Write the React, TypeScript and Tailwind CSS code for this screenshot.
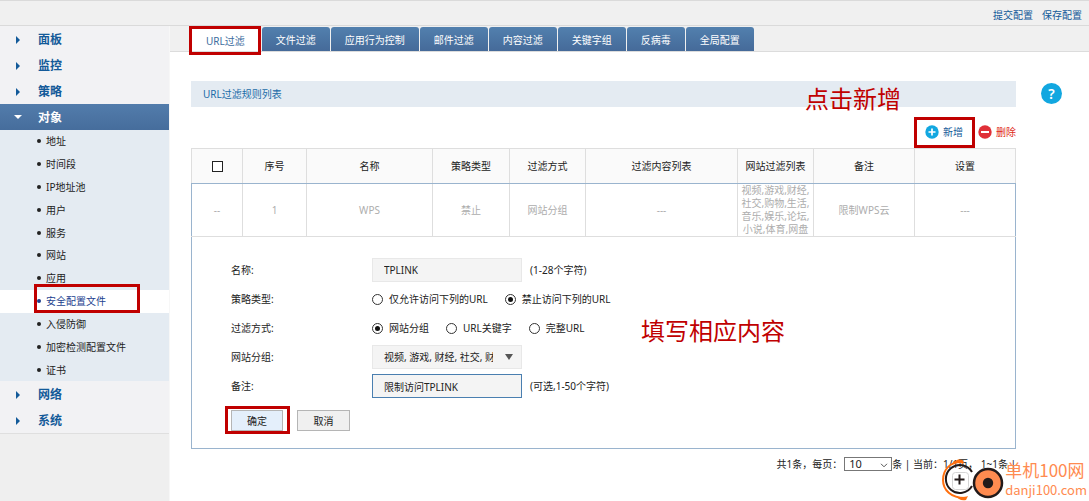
import { useState } from 'react'
import type { ReactNode } from 'react'

const TABS = ['URL过滤', '文件过滤', '应用行为控制', '邮件过滤', '内容过滤', '关键字组', '反病毒', '全局配置']

const OBJECT_ITEMS = [
  '地址',
  '时间段',
  'IP地址池',
  '用户',
  '服务',
  '网站',
  '应用',
  '安全配置文件',
  '入侵防御',
  '加密检测配置文件',
  '证书',
]

const COLUMNS = [
  { title: '序号', width: 'w-[64px]' },
  { title: '名称', width: 'w-[126px]' },
  { title: '策略类型', width: 'w-[77px]' },
  { title: '过滤方式', width: 'w-[76px]' },
  { title: '过滤内容列表', width: 'w-[152px]' },
  { title: '网站过滤列表', width: 'w-[76px]' },
  { title: '备注', width: 'w-[101px]' },
  { title: '设置', width: '' },
]

// red outline used to point at a step
const Mark = ({ className }: { className: string }) => (
  <span className={`pointer-events-none absolute z-10 border-[3px] border-[#c00000] ${className}`} />
)

const NavItem = ({ title, open = false }: { title: string; open?: boolean }) => (
  <button
    type="button"
    className={`flex h-[26px] w-full items-center pt-[2px] text-left text-xs font-bold ${
      open ? 'bg-linear-to-b from-[#527cab] to-[#466d9c] text-white' : 'text-[#135a99]'
    }`}
  >
    <svg viewBox="0 0 8 8" className="mr-4 ml-[14px] h-2 w-2" fill="currentColor">
      {open ? <path d="M0 1h8L4 5z" /> : <path d="M2 0l4 4-4 4z" />}
    </svg>
    {title}
  </button>
)

const Sidebar = () => (
  <aside className="w-[170px] shrink-0 border-r border-[#f7f7f7] bg-[#efefef]">
    <nav className="border-b border-[#dfdfdf] bg-[#f2f2f4]">
      <NavItem title="面板" />
      <NavItem title="监控" />
      <NavItem title="策略" />
      <NavItem title="对象" open />
      <ul className="grid h-[251px] auto-rows-fr bg-[#e4ebf2]">
        {OBJECT_ITEMS.map((item) => {
          const active = item === '安全配置文件'
          return (
            <li key={item} className={`relative ${active ? 'bg-white text-[#1c3f8f]' : 'text-[#222]'}`}>
              <a href="#" className="flex h-full items-center pl-[37px]">
                <span className="mr-[5px] h-1 w-1 rounded-full bg-current" />
                {item}
              </a>
              {active && <Mark className="-top-[6px] right-[29px] bottom-0 left-[34px]" />}
            </li>
          )
        })}
      </ul>
      <NavItem title="网络" />
      <NavItem title="系统" />
    </nav>
  </aside>
)

const TabBar = () => (
  <div className="flex h-[26px] items-end gap-px border-b border-[#dcdcdc] bg-[#f0f0f0] pl-[20px]">
    {TABS.map((tab, i) =>
      i === 0 ? (
        <button key={tab} type="button" className="relative h-6 bg-white px-4 pt-1 text-[#3d6d9e]">
          {tab}
          <Mark className="-top-px right-0 -bottom-[4px] -left-px" />
        </button>
      ) : (
        <button
          key={tab}
          type="button"
          className="h-6 rounded-t-[3px] bg-linear-to-b from-[#5280ae] to-[#456a99] px-[14px] pt-[2px] text-white"
        >
          {tab}
        </button>
      ),
    )}
  </div>
)

const Toolbar = () => (
  <div className="flex h-[41px] items-end justify-end gap-[15px] pb-2">
    <button type="button" className="relative flex items-center gap-1 text-[#135a99]">
      <svg viewBox="0 0 14 14" className="h-[14px] w-[14px]">
        <circle cx="7" cy="7" r="6.7" fill="#12a7e0" />
        <path d="M7 3.5v7M3.5 7h7" stroke="#fff" strokeWidth="1.7" />
      </svg>
      新增
      <Mark className="-top-[7px] -right-[12px] -bottom-[8px] -left-[11px]" />
    </button>
    <button type="button" className="flex items-center gap-1 text-[#e02b20]">
      <svg viewBox="0 0 14 14" className="h-[14px] w-[14px]">
        <circle cx="7" cy="7" r="6.7" fill="#e03038" />
        <path d="M3 7h8" stroke="#fff" strokeWidth="2" />
      </svg>
      删除
    </button>
  </div>
)

const RuleTable = () => (
  <table className="w-full table-fixed border-collapse text-center">
    <thead>
      <tr className="h-[35px] bg-[#fafafa] text-[#222]">
        <th className="w-[51px] border border-[#dedede] border-b-[#9ab4ce]">
          <input
            type="checkbox"
            aria-label="全选"
            className="mx-auto block h-[11px] w-[11px] appearance-none border border-[#222] bg-white"
          />
        </th>
        {COLUMNS.map((col) => (
          <th key={col.title} className={`border border-[#dedede] border-b-[#9ab4ce] font-normal ${col.width}`}>
            {col.title}
          </th>
        ))}
      </tr>
    </thead>
    <tbody>
      <tr className="h-[53px] text-[#adadad]">
        <td className="border border-[#dedede] border-t-[#9ab4ce] border-l-[#9ab4ce]">--</td>
        <td className="border border-[#dedede] border-t-[#9ab4ce]">1</td>
        <td className="border border-[#dedede] border-t-[#9ab4ce]">WPS</td>
        <td className="border border-[#dedede] border-t-[#9ab4ce]">禁止</td>
        <td className="border border-[#dedede] border-t-[#9ab4ce]">网站分组</td>
        <td className="border border-[#dedede] border-t-[#9ab4ce]">---</td>
        <td className="border border-[#dedede] border-t-[#9ab4ce] leading-[13px]">
          视频,游戏,财经,
          <br />
          社交,购物,生活,
          <br />
          音乐,娱乐,论坛,
          <br />
          小说,体育,网盘
        </td>
        <td className="border border-[#dedede] border-t-[#9ab4ce]">限制WPS云</td>
        <td className="border border-[#dedede] border-t-[#9ab4ce] border-r-[#9ab4ce]">---</td>
      </tr>
    </tbody>
  </table>
)

const Row = ({ label, htmlFor, children }: { label: string; htmlFor?: string; children: ReactNode }) => (
  <div className="flex h-6 items-center">
    {htmlFor ? (
      <label htmlFor={htmlFor} className="w-[141px]">
        {label}
      </label>
    ) : (
      <span className="w-[141px]">{label}</span>
    )}
    {children}
  </div>
)

type RadiosProps = { name: string; options: string[]; value: string; onChange: (v: string) => void }

const Radios = ({ name, options, value, onChange }: RadiosProps) => (
  <div role="radiogroup" aria-label={name} className="flex gap-[17px]">
    {options.map((opt) => (
      <label key={opt} className="flex items-center gap-[6px]">
        <input
          type="radio"
          name={name}
          checked={value === opt}
          onChange={() => onChange(opt)}
          className="h-[11px] w-[11px] appearance-none rounded-full border border-[#333] bg-white bg-clip-content p-[2px] checked:bg-[#111]"
        />
        {opt}
      </label>
    ))}
  </div>
)

const RuleForm = () => {
  const [name, setName] = useState('TPLINK')
  const [policy, setPolicy] = useState('禁止访问下列的URL')
  const [mode, setMode] = useState('网站分组')
  const [remark, setRemark] = useState('限制访问TPLINK')

  return (
    <form
      className="relative border border-t-0 border-[#9ab4ce] pt-[21px] pb-[17px] pl-[39px]"
      onSubmit={(e) => e.preventDefault()}
    >
      <div className="flex flex-col gap-[5px]">
        <Row label="名称:" htmlFor="name">
          <input
            id="name"
            value={name}
            onChange={(e) => setName(e.target.value)}
            className="mr-2 h-6 w-[150px] border border-[#e8e8e8] bg-[#f4f4f4] px-[11px]"
          />
          (1-28个字符)
        </Row>
        <Row label="策略类型:">
          <Radios
            name="策略类型"
            options={['仅允许访问下列的URL', '禁止访问下列的URL']}
            value={policy}
            onChange={setPolicy}
          />
        </Row>
        <Row label="过滤方式:">
          <Radios name="过滤方式" options={['网站分组', 'URL关键字', '完整URL']} value={mode} onChange={setMode} />
        </Row>
        <Row label="网站分组:" htmlFor="group">
          <div className="relative">
            <select
              id="group"
              className="block h-6 w-[150px] appearance-none border border-[#e8e8e8] bg-[#f4f4f4] pr-7 pl-[11px]"
            >
              <option>视频, 游戏, 财经, 社交, 财经</option>
            </select>
            <svg viewBox="0 0 10 6" className="pointer-events-none absolute top-[9px] right-2 h-[6px] w-[10px]">
              <path d="M1 0h8L5 6z" fill="#555" />
            </svg>
          </div>
        </Row>
        <Row label="备注:" htmlFor="remark">
          <input
            id="remark"
            value={remark}
            onChange={(e) => setRemark(e.target.value)}
            className="mr-2 h-6 w-[150px] border border-[#4a7fb0] bg-[#f4f4f4] px-[11px]"
          />
          (可选,1-50个字符)
        </Row>
      </div>
      <div className="mt-3 flex gap-[14px]">
        <button type="submit" className="relative h-[21px] w-[52px] border border-[#b5b5b5] bg-[#e4effb]">
          确定
          <Mark className="-top-[5px] -right-[8px] -bottom-[4px] -left-[7px]" />
        </button>
        <button type="button" className="h-[21px] w-[53px] border border-[#b5b5b5] bg-[#f0f0f0]">
          取消
        </button>
      </div>
      <p className="absolute top-[78px] left-[449px] text-2xl text-[#c00000]">填写相应内容</p>
    </form>
  )
}

const Pager = () => (
  <div className="mt-2 flex h-[14px] items-center justify-end">
    <label htmlFor="size" className="mr-[2px]">
      共1条，每页：
    </label>
    <div className="relative">
      <select
        id="size"
        className="block h-[14px] w-12 appearance-none border border-[#777] bg-white pl-1 text-[11px] leading-3"
      >
        <option>10</option>
      </select>
      <svg viewBox="0 0 8 5" className="pointer-events-none absolute top-[6px] right-1 h-[5px] w-2">
        <path d="M1 .8l3 3 3-3" fill="none" stroke="#555" />
      </svg>
    </div>
    <span>条 | 当前：1/1页，&nbsp;1~1条 |</span>
  </div>
)

const Watermark = () => (
  <div className="pointer-events-none absolute right-[2px] bottom-0 flex h-[42px] items-center text-[#ff8b50]">
    <svg viewBox="0 0 64 42" className="h-[42px] w-16">
      <rect x="11.5" y="13.500" width="16" height="17" rx="3" fill="#fff" fillOpacity=".6" stroke="#d5d5d5" />
      <path d="M22 3C9 2 2 11 2 21c0 10 8 18 22 18" fill="none" stroke="#ff7010" strokeWidth="2" />
      <path d="M11 5c3-5 10-6 12-2l-1 2C18 3 14 4 11 5z" fill="#ff7010" />
      <path d="M15 37c4 2 9 1 12 0l-2 4c-5 1-8-1-10-4z" fill="#ff7010" />
      <path d="M31 27a14 14 0 1 1 0-14" fill="none" stroke="#221a1a" strokeWidth="2" />
      <path d="M18.500 15.500v10M13.500 20.500h10" stroke="#221a1a" strokeWidth="2" />
      <circle cx="47" cy="24" r="14" fill="#ff8b50" stroke="#221a1a" strokeWidth="2.500" />
      <circle cx="47" cy="24" r="5.200" fill="#221a1a" />
    </svg>
    <div className="font-['Noto_Sans_CJK_SC',sans-serif]">
      <p className="text-[17px] leading-5">单机100网</p>
      <p className="text-[13px] leading-5">danji100.com</p>
    </div>
  </div>
)

export default function App() {
  return (
    <div className="relative flex min-h-screen flex-col bg-white font-['Noto_Sans','Noto_Sans_CJK_SC',sans-serif] text-[10px] leading-4 text-[#222]">
      <header className="flex h-[26px] items-center justify-end gap-[9px] border-t border-b border-[#dadada] bg-[#f0f0f0] pt-1 pr-[7px] text-[#135a99]">
        <a href="#">提交配置</a>
        <a href="#">保存配置</a>
      </header>
      <div className="flex flex-1">
        <Sidebar />
        <main className="min-w-0 flex-1">
          <TabBar />
          <div className="flex pt-[29px] pl-[21px]">
            <section className="min-w-0 flex-1">
              <div className="relative flex h-[26px] items-center bg-[#e4ebf2] pl-3 text-[#1b6ca8]">
                <h1>URL过滤规则列表</h1>
                <p className="absolute top-[2px] right-[115px] text-2xl text-[#c00000]">点击新增</p>
              </div>
              <Toolbar />
              <RuleTable />
              <RuleForm />
              <Pager />
            </section>
            <div className="w-[73px] shrink-0">
              <button
                type="button"
                aria-label="帮助"
                className="mt-[2px] ml-[25px] h-[21px] w-[21px] rounded-full bg-[#12a7e0] text-sm leading-5 font-semibold text-white"
              >
                ?
              </button>
            </div>
          </div>
        </main>
      </div>
      <Watermark />
    </div>
  )
}
